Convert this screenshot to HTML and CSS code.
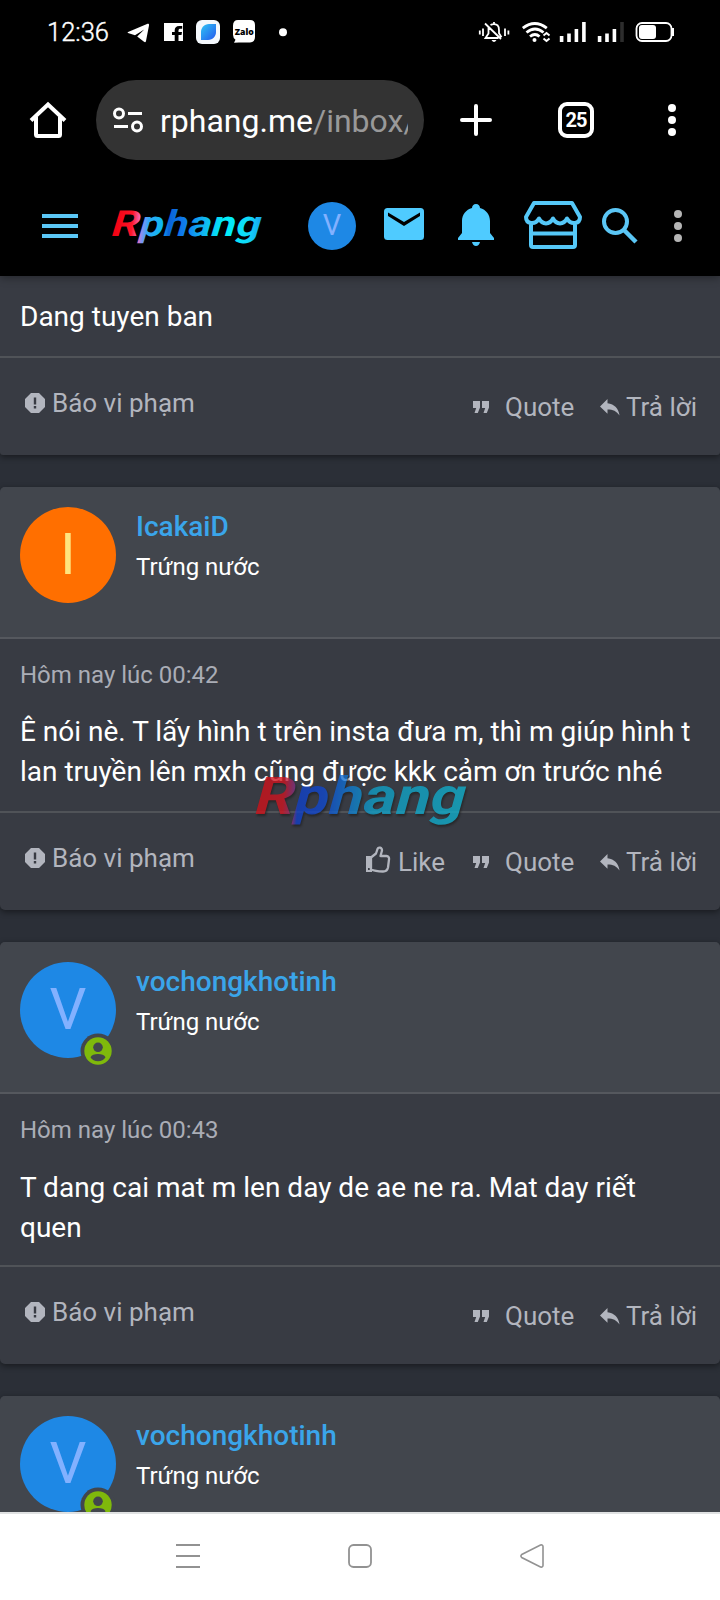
FILE: index.html
```html
<!DOCTYPE html>
<html lang="vi">
<head>
<meta charset="utf-8">
<title>Rphang</title>
<link rel="stylesheet" href="styles.css">
</head>
<body>
<svg class="defs" width="0" height="0" aria-hidden="true">
  <defs>
    <linearGradient id="brand" x1="0" x2="1" y1="0" y2="0">
      <stop offset="0" stop-color="#f00010"/><stop offset=".13" stop-color="#ff1428"/><stop offset=".18" stop-color="#f56ab8"/>
      <stop offset=".2" stop-color="#8a90f0"/><stop offset=".24" stop-color="#30a8f8"/><stop offset=".33" stop-color="#10b8f0"/><stop offset=".38" stop-color="#0a64d8"/>
      <stop offset=".5" stop-color="#1080f0"/><stop offset=".62" stop-color="#10b8f0"/><stop offset=".76" stop-color="#00f0f8"/><stop offset=".92" stop-color="#10d8f8"/><stop offset="1" stop-color="#18a0f0"/>
    </linearGradient>
    <linearGradient id="mark" x1="0" x2="1" y1="0" y2="0">
      <stop offset="0" stop-color="#d01018"/><stop offset=".13" stop-color="#d01420"/><stop offset=".18" stop-color="#803080"/>
      <stop offset=".2" stop-color="#1040c8"/><stop offset=".32" stop-color="#1048d0"/><stop offset=".44" stop-color="#1078d0"/><stop offset=".56" stop-color="#10a0c8"/><stop offset="1" stop-color="#10b0cc"/>
    </linearGradient>
    <linearGradient id="leaf" x1="0" x2="1" y1="0" y2="1"><stop offset="0" stop-color="#2fc4f4"/><stop offset="1" stop-color="#2458ee"/></linearGradient>
    <symbol id="i-report" viewBox="0 0 20 20"><path fill-rule="evenodd" d="M6 0h8l6 6v8l-6 6H6l-6-6V6zM8.800 4.500V11.500h2.400V4.500zM8.800 13v2.400h2.400V13z"/></symbol>
    <symbol id="i-quote" viewBox="0 0 16 12"><path d="M0 0h7v6.500L4.800 12H1.500L3.200 7H0zM9 0h7v6.500L13.800 12h-3.300L12.200 7H9z"/></symbol>
    <symbol id="i-reply" viewBox="0 0 20 17"><path d="M7.500 0v4.200C14.500 5 18.500 9.500 19.500 16.500 16.500 12 13 10.400 7.500 10.400v4.400L0 7.400z"/></symbol>
    <symbol id="i-like" viewBox="0 0 26 28"><path fill="none" stroke="currentColor" stroke-width="2.300" stroke-linejoin="round" d="M6 11.500l5-4 1.500-4.500c1-2.500 4.500-1.500 4.500 1.500l-1.500 5.500h6c2 0 2.800 1.700 2.500 3.500l-1 8c-.5 2.500-2.500 4-5 4-4 0-8.500-.3-12-2.300z"/><path fill-rule="evenodd" d="M1 10h6v16H1zM3 22v2h1.800v-2z"/></symbol>
    <symbol id="i-online" viewBox="0 0 36 36"><circle cx="18" cy="18" r="17.500" fill="#42464d"/><circle cx="18" cy="18" r="13.700" fill="#7fb90b"/><circle cx="18" cy="14.300" r="4.800" fill="#42464d"/><path fill="#42464d" d="M10.500 24.200c1-2 4-3.200 7.500-3.200s6.500 1.200 7.500 3.200c-1.500 2.400-4.300 4.100-7.500 4.100s-6-1.700-7.500-4.100z"/></symbol>
  </defs>
</svg>
<div class="phone">
  <div class="status">
    <time class="clock">12:36</time>
    <svg class="notices" width="170" height="28" viewBox="122 18 170 28">
      <path fill="#fff" d="M127.500 32.200L147 24c1.500-.5 2.300 0 2 1.500l-3 15.500c-.3 1.300-1 1.500-2 .8l-6.800-5.300 7-7-9.200 5.700-7-2.200z"/>
      <path fill="#fff" d="M164 23h19v18h-4.500v-6h3l.5-3h-3.500v-1.500c0-1.300.6-1.800 2-1.800h1.700V26h-3c-3 0-4.500 1.700-4.500 4.300V32H172v3h2.700v6H164z"/>
      <rect x="196" y="20" width="24" height="24" rx="6" fill="#f4f8fc"/>
      <path d="M201 40v-8c0-4 3-8 8-8h7v8c0 4-3 8-8 8z" fill="url(#leaf)"/>
      <path fill="#fff" d="M238 20h12q5 0 5 5v12q0 5-5 5.500h-11l-5 .3 1.500-3q-2.500-2-2.500-5v-9q0-5.800 5-5.800z"/>
      <text class="zalo" x="234.800" y="34.500" textLength="19" lengthAdjust="spacingAndGlyphs">Zalo</text>
      <circle cx="283" cy="32.200" r="4" fill="#fff"/>
    </svg>
    <svg class="signals" width="200" height="28" viewBox="476 18 200 28" fill="none" stroke="#fff">
      <path stroke-width="1.800" d="M479.800 30.500v4M483 28.500v7.500M505 28.500v7.500M508.400 30.500v4M485 23.500l16 15.500M488.500 27.500v6l-3 4.500h13M490.500 25q3.500-2 7 .2 1.500 1.500 1.500 5v3l2.500 4M494 22v2"/>
      <path fill="#fff" stroke="none" d="M491.500 40h5q-2.500 4-5 0z"/>
      <path stroke-width="2.800" d="M522.800 28.200q12-9.500 24 0M526.500 32.500q8.500-7 17 0M530 36.500q5-4 9.500 0"/>
      <circle cx="534.500" cy="40" r="2" fill="#fff" stroke="none"/>
      <path stroke-width="2" d="M543.500 35.500l3-2.500 3 2.500M543.500 38.500l3 2.500 3-2.500"/>
      <path stroke-width="3.600" d="M561.600 36v6M569 33.500V42M576.400 29v13M583.900 22v20M599.600 36v6M607 33.500V42M614.400 29v13"/>
      <path stroke="#2d2d2d" stroke-width="3.600" d="M622 22v20"/>
      <rect x="636.500" y="23" width="35" height="18" rx="5.500" stroke-width="1.800"/>
      <rect x="639" y="25" width="17" height="14" rx="3" fill="#fff" stroke="none"/>
      <path stroke-width="2" d="M673 28v8"/>
    </svg>
  </div>
  <div class="browser">
    <svg class="home" width="38" height="38" viewBox="29 101 38 38" fill="none" stroke="#fff" stroke-width="4"><path d="M31 120.500L48 104.500l17 16M36 117v17.500q0 1.500 1.500 1.500h21q1.500 0 1.500-1.500V117"/></svg>
    <div class="address">
      <svg width="30" height="26" viewBox="113 107 30 26" fill="none" stroke="#fff" stroke-width="3"><circle cx="119" cy="113.500" r="4.500"/><path d="M128 113.500h14M114 126.500h14"/><circle cx="137" cy="126.500" r="4.500"/></svg>
      <div class="url">rphang.me<span>/inbox/</span></div>
    </div>
    <svg class="plus" width="32" height="32" viewBox="0 0 32 32" stroke="#fff" stroke-width="4" stroke-linecap="round"><path d="M16 2v28M2 16h28"/></svg>
    <div class="tabs">25</div>
    <svg class="more" width="8" height="32" viewBox="0 0 8 32" fill="#fff"><circle cx="4" cy="4" r="4"/><circle cx="4" cy="16" r="4"/><circle cx="4" cy="28" r="4"/></svg>
  </div>
  <header class="site">
    <svg class="burger" width="36" height="24" viewBox="0 0 36 24" fill="#5bc6f5"><path d="M0 0h36v4H0zM0 10h36v4H0zM0 20h36v4H0z"/></svg>
    <svg class="logo" width="156" height="40" viewBox="0 0 156 40"><text transform="translate(2.500 29) skewX(-5)" textLength="149" lengthAdjust="spacingAndGlyphs" fill="url(#brand)">Rphang</text></svg>
    <div class="avatar small">V</div>
    <svg class="mail" width="40" height="32" viewBox="0 0 40 32"><rect width="40" height="32" rx="3.500" fill="#4fcbff"/><path d="M4 4.500v3.500l16 10 16-10V4.500L20 14z" fill="#000"/></svg>
    <svg class="bell" width="36" height="42" viewBox="0 0 36 42" fill="#4fcbff"><path d="M18 0c2.500 0 4 1.700 4 4 6 1.700 10 6.500 10 13v12l4 5v2H0v-2l4-5V17C4 10.500 8 5.700 14 4c0-2.300 1.500-4 4-4zM14 38h8q-1 4-4 4t-4-4z"/></svg>
    <svg class="shop" width="58" height="48" viewBox="0 0 58 48" fill="none" stroke="#55c8f8" stroke-width="4" stroke-linejoin="round"><path d="M7 22v22q0 2 2 2h40q2 0 2-2V22M7 32.500h44M10 2h38l8 14c0 7-9 8.500-13 1.500-3.500 6.500-10.500 6.500-14 0-3.500 6.500-10.500 6.500-14 0C11 24.500 2 23 2 16z"/></svg>
    <svg class="search" width="36" height="36" viewBox="0 0 36 36" fill="none" stroke="#5bc6f5"><circle cx="13.500" cy="13.500" r="11.500" stroke-width="4"/><path d="M22 22l12 12" stroke-width="4.500"/></svg>
    <svg class="dots" width="8" height="32" viewBox="0 0 8 32" fill="#b5b5b5"><circle cx="4" cy="4" r="4"/><circle cx="4" cy="16" r="4"/><circle cx="4" cy="28" r="4"/></svg>
  </header>
  <main class="thread">
    <article class="post first">
      <div class="content"><p class="text">Dang tuyen ban</p></div>
      <footer class="foot">
        <a class="report"><svg><use href="#i-report"/></svg>Báo vi phạm</a>
        <div class="actions">
          <a class="quote"><svg><use href="#i-quote"/></svg>Quote</a>
          <a class="reply"><svg><use href="#i-reply"/></svg>Trả lời</a>
        </div>
      </footer>
    </article>
    <article class="post">
      <header class="user">
        <div class="avatar orange">I</div>
        <div><h2 class="name">IcakaiD</h2><div class="rank">Trứng nước</div></div>
      </header>
      <div class="content"><div class="date">Hôm nay lúc 00:42</div><p class="text">Ê nói nè. T lấy hình t trên insta đưa m, thì m giúp hình t<br>lan truyền lên mxh cũng được kkk cảm ơn trước nhé</p></div>
      <footer class="foot">
        <a class="report"><svg><use href="#i-report"/></svg>Báo vi phạm</a>
        <div class="actions">
          <a class="like"><svg><use href="#i-like"/></svg>Like</a>
          <a class="quote"><svg><use href="#i-quote"/></svg>Quote</a>
          <a class="reply"><svg><use href="#i-reply"/></svg>Trả lời</a>
        </div>
      </footer>
      <svg class="watermark" width="220" height="64" viewBox="0 0 220 64"><text transform="translate(5 45) skewX(-4)" textLength="210" lengthAdjust="spacingAndGlyphs" fill="url(#mark)">Rphang</text></svg>
    </article>
    <article class="post">
      <header class="user">
        <div class="avatar">V<svg class="online"><use href="#i-online"/></svg></div>
        <div><h2 class="name">vochongkhotinh</h2><div class="rank">Trứng nước</div></div>
      </header>
      <div class="content short"><div class="date">Hôm nay lúc 00:43</div><p class="text">T dang cai mat m len day de ae ne ra. Mat day riết<br>quen</p></div>
      <footer class="foot">
        <a class="report"><svg><use href="#i-report"/></svg>Báo vi phạm</a>
        <div class="actions">
          <a class="quote"><svg><use href="#i-quote"/></svg>Quote</a>
          <a class="reply"><svg><use href="#i-reply"/></svg>Trả lời</a>
        </div>
      </footer>
    </article>
    <article class="post">
      <header class="user">
        <div class="avatar">V<svg class="online"><use href="#i-online"/></svg></div>
        <div><h2 class="name">vochongkhotinh</h2><div class="rank">Trứng nước</div></div>
      </header>
    </article>
  </main>
  <nav class="system">
    <svg width="24" height="24" viewBox="0 0 24 24" fill="#929292"><path d="M0 0h24v2H0zM0 11h24v2H0zM0 22h24v2H0z"/></svg>
    <svg width="24" height="24" viewBox="0 0 24 24" fill="none" stroke="#929292" stroke-width="1.800"><rect x="1" y="1" width="22" height="22" rx="4.500"/></svg>
    <svg width="24" height="24" viewBox="0 0 24 24" fill="none" stroke="#929292" stroke-width="1.600"><path d="M1.700 10.500L20.500 1q2.300-.6 2.500 1.500v19q-.2 2.100-2.500 1.500L1.700 13.500q-1.500-1.500 0-3z"/></svg>
  </nav>
</div>
</body>
</html>
```
FILE: styles.css
```css
* { box-sizing: border-box; }
body { margin: 0; background: #000; font-family: Roboto, "Noto Sans", sans-serif; color: #fff; }
h2, p { margin: 0; }
svg { display: block; flex: none; }
.defs { position: absolute; }
.phone { width: 720px; height: 1600px; display: flex; flex-direction: column; overflow: hidden; }

.status { height: 64px; flex: none; display: flex; align-items: center; padding: 0 44px 0 47px; }
.clock { width: 75px; font-size: 25.500px; font-weight: 300; -webkit-text-stroke: 0.4px #fff; }
.signals { margin-left: auto; }
.zalo { font: 900 9px "Open Sans", sans-serif; fill: #000; }

.browser { height: 112px; flex: none; display: flex; align-items: center; padding: 0 0 0 29px; }
.address { width: 328px; height: 80px; margin-left: 29px; border-radius: 40px; background: #333; display: flex; align-items: center; padding: 0 16px 0 17px; }
.url { margin-left: 17px; padding-top: 2px; flex: 1; overflow: hidden; white-space: nowrap; font-size: 32px; line-height: 44px; }
.url span { color: #999; }
.plus { margin-left: 36px; }
.tabs { width: 36px; height: 36px; margin-left: 66px; border: 4px solid #fff; border-radius: 9px; text-align: center; font: 700 20px/28px Roboto, sans-serif; letter-spacing: -1px; }
.more { margin-left: 74px; }

.site { height: 100px; flex: none; display: flex; align-items: center; padding: 0 0 0 42px; background: #000; z-index: 2; box-shadow: 0 2px 8px rgba(0, 0, 0, .35); }
.logo { margin: 2px 0 0 31px; overflow: visible; }
.logo text { font: italic 700 36px Roboto, sans-serif; }
.avatar { position: relative; width: 96px; height: 96px; flex: none; border-radius: 50%; background: #1e88e5; color: #82b1ff; font-size: 58px; line-height: 94px; text-align: center; }
.avatar.small { width: 48px; height: 48px; margin-left: 43px; font-size: 29px; line-height: 47px; }
.avatar.orange { background: #ff6f00; color: #ffe57f; }
.mail { margin: -4px 0 0 28px; }
.bell { margin: -2px 0 0 34px; }
.shop { margin: -2px 0 0 30px; }
.search { margin: -1px 0 0 20px; }
.dots { margin-left: 36px; }

.thread { height: 1236px; flex: none; overflow: hidden; background: #2b2f37; display: flex; flex-direction: column; gap: 32px; }
.post { position: relative; flex: none; border-radius: 5px; background: #383b43; box-shadow: 0 2px 6px rgba(0, 0, 0, .45); }
.post.first { border-radius: 0 0 3px 3px; }
.user { display: flex; height: 152px; padding: 20px; background: #42464d; border-bottom: 2px solid #55585e; border-radius: 5px 5px 0 0; }
.user > div:last-child { margin-left: 20px; }
.name { font-size: 28px; font-weight: 500; line-height: 40px; color: #3aa5ea; }
.rank { font-size: 24px; line-height: 41px; }
.online { position: absolute; width: 36px; height: 36px; left: 60px; top: 71px; }
.content { padding: 20px 20px 19px; border-bottom: 2px solid #505358; }
.first .content { padding-top: 21px; }
.date { margin-bottom: 20px; font-size: 24px; line-height: 33px; color: #aaadb6; }
.content.short { padding-bottom: 17px; }
.short .date { margin-bottom: 21px; }
.text { font-size: 28px; line-height: 40px; white-space: nowrap; }
.foot { height: 97px; display: flex; justify-content: space-between; padding: 24px 0 0 25px; font-size: 26px; line-height: 42px; color: #b2b5be; fill: currentColor; }
.foot a { display: flex; align-items: center; height: 42px; }
.report svg { width: 20px; height: 20px; margin-right: 7px; }
.actions { display: flex; margin-top: 4px; }
.like { width: 107px; }
.like svg { width: 26px; height: 28px; margin: -4px 7px 0 -1px; }
.quote { width: 127px; }
.quote svg { width: 16px; height: 12px; margin-right: 16px; }
.reply { width: 120px; }
.reply svg { width: 20px; height: 17px; margin-right: 6px; }
.watermark { position: absolute; left: 250px; top: 282px; opacity: .78; overflow: visible; filter: drop-shadow(1px 2px 1px #222); }
.watermark text { font: italic 700 52px Roboto, sans-serif; }

.system { height: 88px; flex: none; display: flex; justify-content: center; gap: 148px; padding-top: 30px; background: #fff; border-top: 2px solid #dfe1e2; }
```
